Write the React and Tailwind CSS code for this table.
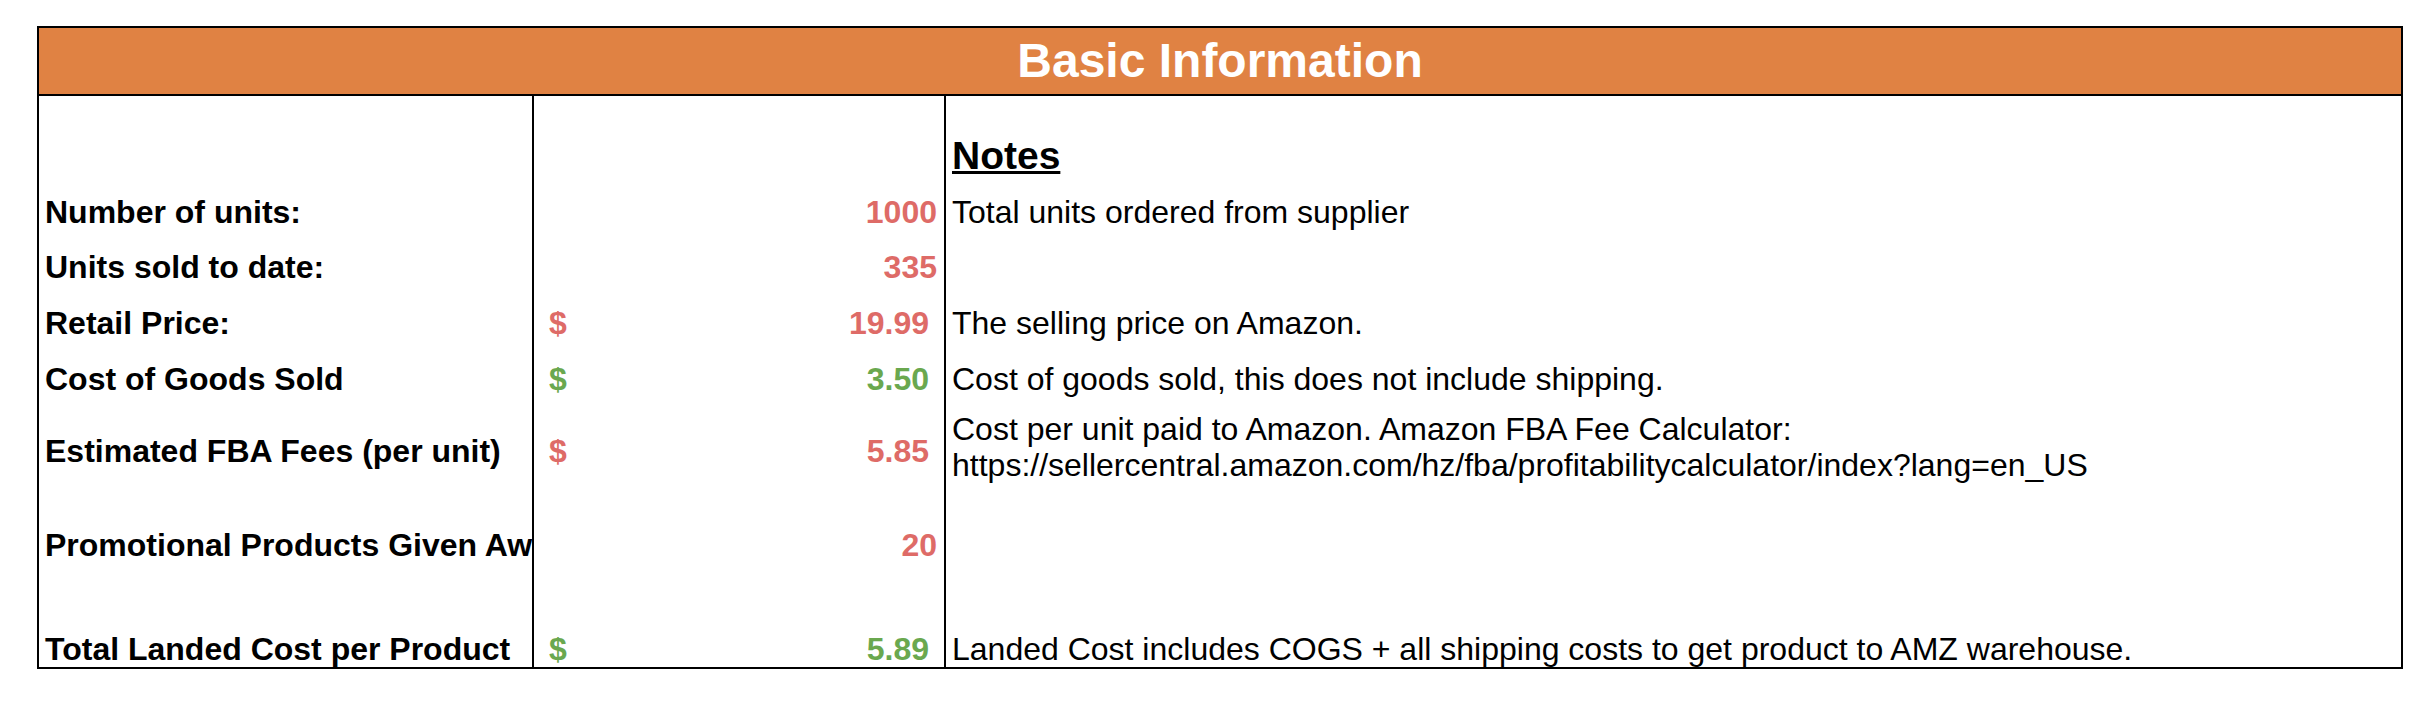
import React from "react";

const RED = "text-[#de6b67]";
const GREEN = "text-[#6aa84f]";

const ROWS = [
  {
    label: "Number of units:",
    value: "1000",
    color: RED,
    note: "Total units ordered from supplier",
  },
  { label: "Units sold to date:", value: "335", color: RED },
  {
    label: "Retail Price:",
    value: "19.99",
    currency: true,
    color: RED,
    note: "The selling price on Amazon.",
  },
  {
    label: "Cost of Goods Sold",
    value: "3.50",
    currency: true,
    color: GREEN,
    note: "Cost of goods sold, this does not include shipping.",
  },
  {
    label: "Estimated FBA Fees (per unit)",
    value: "5.85",
    currency: true,
    color: RED,
    center: true,
    note: (
      <>
        Cost per unit paid to Amazon. Amazon FBA Fee Calculator:
        <br />
        https://sellercentral.amazon.com/hz/fba/profitabilitycalculator/index?lang=en_US
      </>
    ),
  },
  { label: "Promotional Products Given Away", value: "20", color: RED },
  {
    label: "Total Landed Cost per Product",
    value: "5.89",
    currency: true,
    color: GREEN,
    note: "Landed Cost includes COGS + all shipping costs to get product to AMZ warehouse.",
  },
];

function Row({ row }) {
  const align = row.center ? "items-center" : "items-end";
  return (
    <>
      <div className={`flex ${align} overflow-hidden whitespace-nowrap pl-[6px] font-bold`}>
        {row.label}
      </div>
      <div
        className={`flex ${align} justify-between border-x-2 border-black font-bold ${row.color} ${
          row.currency ? "pl-[15px] pr-[15px]" : "pr-[7px]"
        }`}
      >
        <span>{row.currency ? "$" : ""}</span>
        <span>{row.value}</span>
      </div>
      <div className={`flex ${align} pl-[6px] ${row.center ? "pb-[8px]" : ""}`}>
        <div>{row.note}</div>
      </div>
    </>
  );
}

export default function App() {
  return (
    <div className="min-h-[702px] bg-white pt-[26px] pl-[37px] font-['Liberation_Sans',Arial,sans-serif] text-black">
      <div className="w-[2366px] border-2 border-black">
        <div className="flex h-[68px] items-center justify-center border-b-2 border-black bg-[#e08243] text-[48px] leading-none font-bold text-white">
          Basic Information
        </div>
        <div className="grid grid-cols-[493px_414px_1fr] grid-rows-[98px_36px_55px_56px_56px_108px_58px_104px] text-[32px] leading-[36px]">
          <div />
          <div className="border-x-2 border-black" />
          <div className="flex items-end pb-[16px] pl-[6px]">
            <span className="text-[39px] leading-[44px] font-bold underline">Notes</span>
          </div>
          {ROWS.map((row) => (
            <Row key={row.label} row={row} />
          ))}
        </div>
      </div>
    </div>
  );
}
